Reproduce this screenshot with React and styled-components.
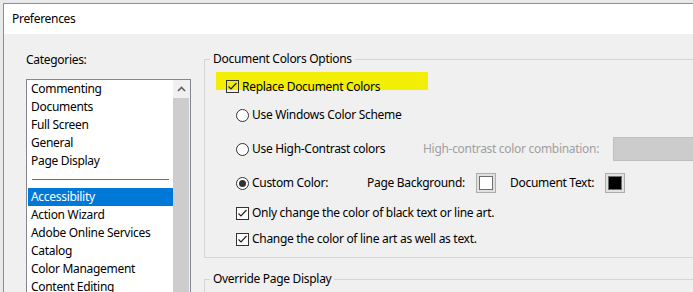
import React from "react";
import styled, { createGlobalStyle } from "styled-components";

const Global = createGlobalStyle`
  html, body { margin: 0; padding: 0; }
  body {
    background: #e9e9e9;
    font-family: "Noto Sans", "Open Sans", sans-serif;
    font-size: 12px;
    letter-spacing: -0.3px;
    color: #000;
    overflow: hidden;
  }
`;

const Window = styled.div`
  margin: 3px 0 0 3px;
  width: 690px;
  height: 289px;
  overflow: hidden;
  border-left: 1px solid #8e8e8e;
  border-top: 1px solid #8e8e8e;
  display: flex;
  flex-direction: column;
  background: #f0f0f0;
`;

const TitleBar = styled.div`
  flex: none;
  height: 30px;
  background: #fff;
  display: flex;
  align-items: center;
  padding-left: 8px;
  line-height: 16px;
`;

const Body = styled.div`
  display: flex;
  padding: 17px 0 0 22px;
  flex: 1;
  min-height: 0;
`;

const LeftCol = styled.div`
  width: 165px;
  flex: none;
  display: flex;
  flex-direction: column;
`;

const Caption = styled.div`
  margin-top: 1px;
  line-height: 16px;
  height: 16px;
`;

const ListBox = styled.div`
  margin-top: 11px;
  border: 1px solid #828790;
  background: #fff;
  display: flex;
  height: 240px;
  flex: none;
`;

const Items = styled.div`
  flex: 1;
  padding-left: 1px;
`;

const Item = styled.div`
  height: 18px;
  line-height: 18px;
  padding-left: 3px;
  white-space: nowrap;
  background: ${(p) => (p.$selected ? "#0078d7" : "transparent")};
  color: ${(p) => (p.$selected ? "#fff" : "#000")};
`;

const Separator = styled.div`
  height: 18px;
  display: flex;
  align-items: center;
  padding: 0 4px 0 4px;
  &::after {
    content: "";
    display: block;
    width: 137px;
    height: 1px;
    margin-top: 1px;
    background: #2c7fc4;
  }
`;

const ScrollBar = styled.div`
  width: 17px;
  background: #f0f0f0;
  display: flex;
  flex-direction: column;
`;

const ScrollBtn = styled.div`
  height: 18px;
  display: flex;
  align-items: center;
  justify-content: center;
`;

const Thumb = styled.div`
  flex: 1;
  background: #cdcdcd;
  margin-right: 1px;
`;

const RightCol = styled.div`
  margin-left: 13px;
  width: 560px;
  flex: none;
  display: flex;
  flex-direction: column;
`;

const Group = styled.fieldset`
  margin: ${(p) => p.$mt || 0}px 0 0 0;
  padding: 0 0 ${(p) => p.$pb || 0}px 0;
  border: 1px solid #d5d5d5;
  min-width: 0;
  display: flex;
  flex-direction: column;
  flex: none;
`;

const Legend = styled.legend`
  margin-left: 5px;
  padding: 0 3px;
  line-height: 16px;
  height: 16px;
`;

const Row = styled.div`
  display: flex;
  align-items: center;
  height: ${(p) => p.$h || 16}px;
  margin-top: ${(p) => p.$mt || 0}px;
  margin-left: ${(p) => p.$ml ?? 31}px;
  line-height: 16px;
  white-space: nowrap;
`;

const Highlight = styled.div`
  margin: 5px 0 0 11px;
  width: 212px;
  height: 18px;
  background: #f2ee05;
  padding-left: 10px;
  box-sizing: border-box;
`;

const HighlightInner = styled.div`
  display: flex;
  align-items: center;
  height: 16px;
  margin-top: 6px;
  white-space: nowrap;
`;

const Box = styled.span`
  width: 13px;
  height: 13px;
  box-sizing: border-box;
  border: 1px solid #333;
  background: ${(p) => (p.$clear ? "transparent" : "#fff")};
  display: inline-flex;
  align-items: center;
  justify-content: center;
  margin-right: 3px;
  flex: none;
`;

const Radio = styled.span`
  width: 13px;
  height: 13px;
  box-sizing: border-box;
  border: 1px solid #333;
  border-radius: 50%;
  background: #fff;
  display: inline-flex;
  align-items: center;
  justify-content: center;
  margin-right: 3px;
  flex: none;
  &::after {
    content: "";
    display: ${(p) => (p.$on ? "block" : "none")};
    width: 7px;
    height: 7px;
    border-radius: 50%;
    background: #333;
  }
`;

const Label = styled.span`
  display: inline-block;
  flex: none;
  width: ${(p) => (p.$w ? `${p.$w}px` : "auto")};
  color: ${(p) => (p.$disabled ? "#a0a0a0" : "#000")};
`;

const DisabledCombo = styled.div`
  width: 120px;
  height: 24px;
  box-sizing: border-box;
  background: #cccccc;
  border: 1px solid #bfbfbf;
  flex: none;
`;

const Swatch = styled.span`
  width: 20px;
  height: 20px;
  box-sizing: border-box;
  border: 1px solid #adadad;
  background: #e1e1e1;
  display: inline-flex;
  align-items: center;
  justify-content: center;
  flex: none;
  margin-right: ${(p) => p.$gap || 0}px;
  &::after {
    content: "";
    width: 14px;
    height: 14px;
    box-sizing: border-box;
    border: 1px solid #6d6d6d;
    background: ${(p) => p.$color};
  }
`;

const Check = ({ clear }) => (
  <Box $clear={clear}>
    <svg width="11" height="11" viewBox="0 0 11 11">
      <polyline points="1.5,5.5 4,8 9.5,2" fill="none" stroke="#222" strokeWidth="1.2" />
    </svg>
  </Box>
);

const categoriesTop = ["Commenting", "Documents", "Full Screen", "General", "Page Display"];
const categoriesBottom = [
  "Accessibility",
  "Action Wizard",
  "Adobe Online Services",
  "Catalog",
  "Color Management",
  "Content Editing",
];

export default function App() {
  return (
    <>
      <Global />
      <Window>
        <TitleBar>Preferences</TitleBar>
        <Body>
          <LeftCol>
            <Caption>Categories:</Caption>
            <ListBox>
              <Items>
                {categoriesTop.map((c) => (
                  <Item key={c}>{c}</Item>
                ))}
                <Separator />
                {categoriesBottom.map((c) => (
                  <Item key={c} $selected={c === "Accessibility"}>
                    {c}
                  </Item>
                ))}
              </Items>
              <ScrollBar>
                <ScrollBtn>
                  <svg width="9" height="6" viewBox="0 0 9 6">
                    <polyline points="1,5 4.5,1.5 8,5" fill="none" stroke="#606060" strokeWidth="1.6" />
                  </svg>
                </ScrollBtn>
                <Thumb />
              </ScrollBar>
            </ListBox>
          </LeftCol>
          <RightCol>
            <Group $pb={10}>
              <Legend>Document Colors Options</Legend>
              <Highlight>
                <HighlightInner>
                  <Check clear />
                  <Label>Replace Document Colors</Label>
                </HighlightInner>
              </Highlight>
              <Row $mt={17}>
                <Radio />
                <Label>Use Windows Color Scheme</Label>
              </Row>
              <Row $mt={14} $h={24}>
                <Radio />
                <Label $w={171}>Use High-Contrast colors</Label>
                <Label $disabled $w={190}>High-contrast color combination:</Label>
                <DisabledCombo />
              </Row>
              <Row $mt={12} $h={20}>
                <Radio $on />
                <Label $w={115}>Custom Color:</Label>
                <Label $w={109}>Page Background:</Label>
                <Swatch $color="#fff" $gap={14} />
                <Label $w={95}>Document Text:</Label>
                <Swatch $color="#000" />
              </Row>
              <Row $mt={12}>
                <Check />
                <Label>Only change the color of black text or line art.</Label>
              </Row>
              <Row $mt={10}>
                <Check />
                <Label>Change the color of line art as well as text.</Label>
              </Row>
            </Group>
            <Group $mt={13} $pb={40}>
              <Legend>Override Page Display</Legend>
            </Group>
          </RightCol>
        </Body>
      </Window>
    </>
  );
}
